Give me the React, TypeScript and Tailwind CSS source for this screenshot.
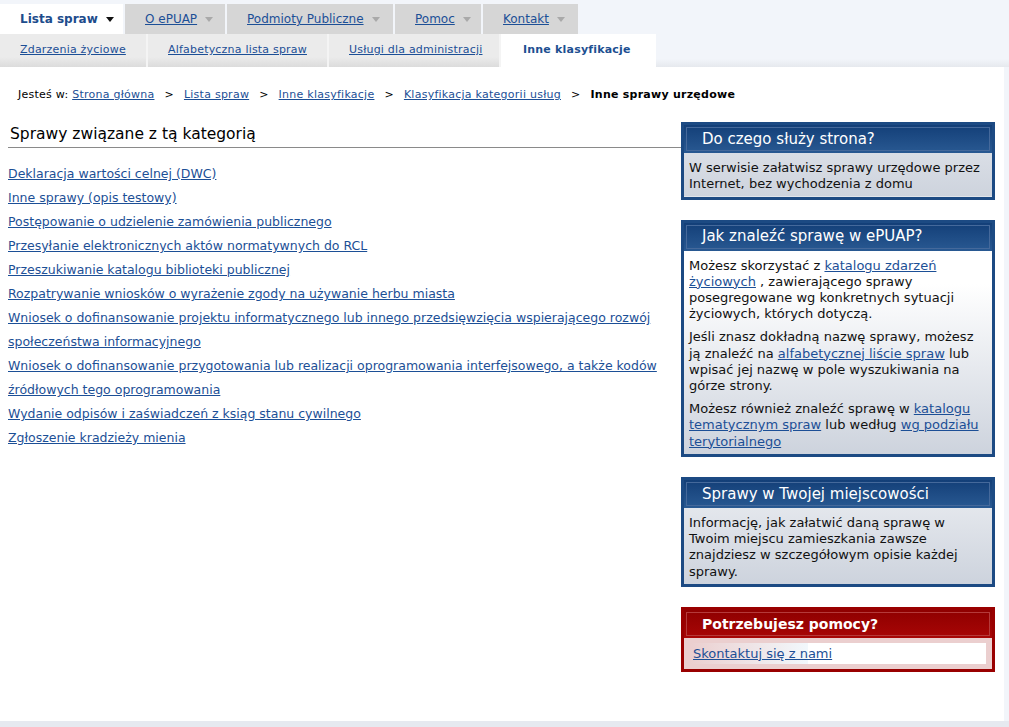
import React from 'react'

const FONT = "font-['DejaVu_Sans',Verdana,sans-serif]"
const LINK = 'text-[#1c4f96] underline'

const TOP_TABS = [
  { label: 'O ePUAP', w: 'w-[100px]' },
  { label: 'Podmioty Publiczne', w: 'w-[166px]' },
  { label: 'Pomoc', w: 'w-[86px]' },
  { label: 'Kontakt', w: 'w-[95px]' },
]

const SUB_TABS = [
  { label: 'Zdarzenia życiowe', w: 'w-[148px]' },
  { label: 'Alfabetyczna lista spraw', w: 'w-[181px]' },
  { label: 'Usługi dla administracji', w: 'w-[172px]' },
]

const SPRAWY = [
  'Deklaracja wartości celnej (DWC)',
  'Inne sprawy (opis testowy)',
  'Postępowanie o udzielenie zamówienia publicznego',
  'Przesyłanie elektronicznych aktów normatywnych do RCL',
  'Przeszukiwanie katalogu biblioteki publicznej',
  'Rozpatrywanie wniosków o wyrażenie zgody na używanie herbu miasta',
  'Wniosek o dofinansowanie projektu informatycznego lub innego przedsięwzięcia wspierającego rozwój społeczeństwa informacyjnego',
  'Wniosek o dofinansowanie przygotowania lub realizacji oprogramowania interfejsowego, a także kodów źródłowych tego oprogramowania',
  'Wydanie odpisów i zaświadczeń z ksiąg stanu cywilnego',
  'Zgłoszenie kradzieży mienia',
]

function Arrow({ color }: { color: string }) {
  return (
    <svg width="8" height="5" viewBox="0 0 8 5" className="ml-[8px]">
      <path d="M0 0h8L4 5z" fill={color} />
    </svg>
  )
}

// ── Boks boczny ───────────────────────────────────────────

function SideBox({
  title,
  red,
  children,
}: {
  title: string
  red?: boolean
  children: React.ReactNode
}) {
  return (
    <div className={`border-[3px] ${red ? 'border-[#990000] bg-[#990000]' : 'border-[#1c4a83] bg-[#1c4a83]'}`}>
      <div
        className={`h-[28px] p-[2px] ${
          red
            ? 'bg-gradient-to-b from-[#8f0000] to-[#a80606]'
            : 'bg-gradient-to-b from-[#133f78] to-[#295992]'
        }`}
      >
        <div
          className={`flex h-full items-center border pl-[15px] text-white ${
            red ? 'border-[#b53a3a] text-[14px] font-bold' : 'border-[#45699b] text-[15px]'
          }`}
        >
          {title}
        </div>
      </div>
      {red ? (
        <div className="bg-[#ebcfcf] px-[6px] py-[5px]">{children}</div>
      ) : (
        <div className="bg-white bg-[linear-gradient(to_bottom,#ffffff,#cdd3dd)] bg-bottom bg-no-repeat bg-[length:100%_170px] px-[5px] pt-[7px] pb-[4px] text-[13px] leading-[16.3px] text-[#111]">
          {children}
        </div>
      )}
    </div>
  )
}

export default function App() {
  return (
    <div className={`${FONT} min-h-[727px] bg-[#f2f5fa] pt-[4px]`}>
      {/* Menu główne */}
      <div className="flex h-[30px] gap-[2px] text-[12px]">
        <div className="flex w-[123px] items-center bg-white pl-[20px] font-bold text-[#1d4c8c]">
          Lista spraw
          <Arrow color="#111" />
        </div>
        {TOP_TABS.map((t) => (
          <div key={t.label} className={`flex ${t.w} items-center bg-[#d6d6d6] pl-[20px]`}>
            <span className={LINK}>{t.label}</span>
            <Arrow color="#a9a9a9" />
          </div>
        ))}
      </div>

      {/* Podmenu */}
      <div className="flex h-[33px] text-[11px] tracking-[0.2px]">
        {SUB_TABS.map((t) => (
          <div
            key={t.label}
            className={`flex ${t.w} items-center border-r-2 border-[#f4f4f4] bg-[linear-gradient(to_bottom,#ebebeb_70%,#dcdcdc)] pl-[20px]`}
          >
            <span className={LINK}>{t.label}</span>
          </div>
        ))}
        <div className="flex w-[155px] items-center bg-white pl-[22px] font-bold text-[#1d4f91]">
          Inne klasyfikacje
        </div>
        <div className="flex-1 bg-[linear-gradient(to_bottom,#f2f5fa_75%,#e6e9ee)]" />
      </div>

      {/* Treść */}
      <div className="mr-[5px] h-[654px] bg-white">
        <div className="pt-[21px] pl-[18px] text-[11px] leading-[14px] tracking-[0.25px] text-black">
          Jesteś w: <span className={LINK}>Strona główna</span>
          <span className="mx-[10px]">&gt;</span>
          <span className={LINK}>Lista spraw</span>
          <span className="mx-[10px]">&gt;</span>
          <span className={LINK}>Inne klasyfikacje</span>
          <span className="mx-[10px]">&gt;</span>
          <span className={LINK}>Klasyfikacja kategorii usług</span>
          <span className="mx-[10px]">&gt;</span>
          <span className="font-bold">Inne sprawy urzędowe</span>
        </div>

        <div className="mt-[20px] flex">
          <div className="flex-1 pl-[8px]">
            <h2 className="border-b border-[#8a8a8a] pt-[3px] pb-[4px] pl-[2px] text-[15.5px] leading-[18px] text-black">
              Sprawy związane z tą kategorią
            </h2>
            <ul className="mt-[14px] pr-[4px] text-[12.5px] leading-[24px]">
              {SPRAWY.map((s) => (
                <li key={s}>
                  <span className={LINK}>{s}</span>
                </li>
              ))}
            </ul>
          </div>

          <div className="mr-[9px] flex w-[314px] flex-col gap-[20px]">
            <SideBox title="Do czego służy strona?">
              W serwisie załatwisz sprawy urzędowe przez Internet, bez wychodzenia z domu
            </SideBox>
            <SideBox title="Jak znaleźć sprawę w ePUAP?">
              <p className="mb-[6.5px]">
                Możesz skorzystać z <span className={LINK}>katalogu zdarzeń życiowych</span> ,
                zawierającego sprawy posegregowane wg konkretnych sytuacji życiowych, których
                dotyczą.
              </p>
              <p className="mb-[6.5px]">
                Jeśli znasz dokładną nazwę sprawy, możesz ją znaleźć na{' '}
                <span className={LINK}>alfabetycznej liście spraw</span> lub wpisać jej nazwę w
                pole wyszukiwania na górze strony.
              </p>
              <p>
                Możesz również znaleźć sprawę w{' '}
                <span className={LINK}>katalogu tematycznym spraw</span> lub według{' '}
                <span className={LINK}>wg podziału terytorialnego</span>
              </p>
            </SideBox>
            <SideBox title="Sprawy w Twojej miejscowości">
              Informację, jak załatwić daną sprawę w Twoim miejscu zamieszkania zawsze znajdziesz w
              szczegółowym opisie każdej sprawy.
            </SideBox>
            <SideBox title="Potrzebujesz pomocy?" red>
              <div className="flex h-[21px] items-center bg-white bg-[linear-gradient(to_right,#ebcfcf,#f2f8fc_40%,#ffffff_40%)] pl-[3px] text-[13px]">
                <span className={LINK}>Skontaktuj się z nami</span>
              </div>
            </SideBox>
          </div>
        </div>
      </div>
      <div className="h-[6px] bg-[#e6e9f0]" />
    </div>
  )
}
